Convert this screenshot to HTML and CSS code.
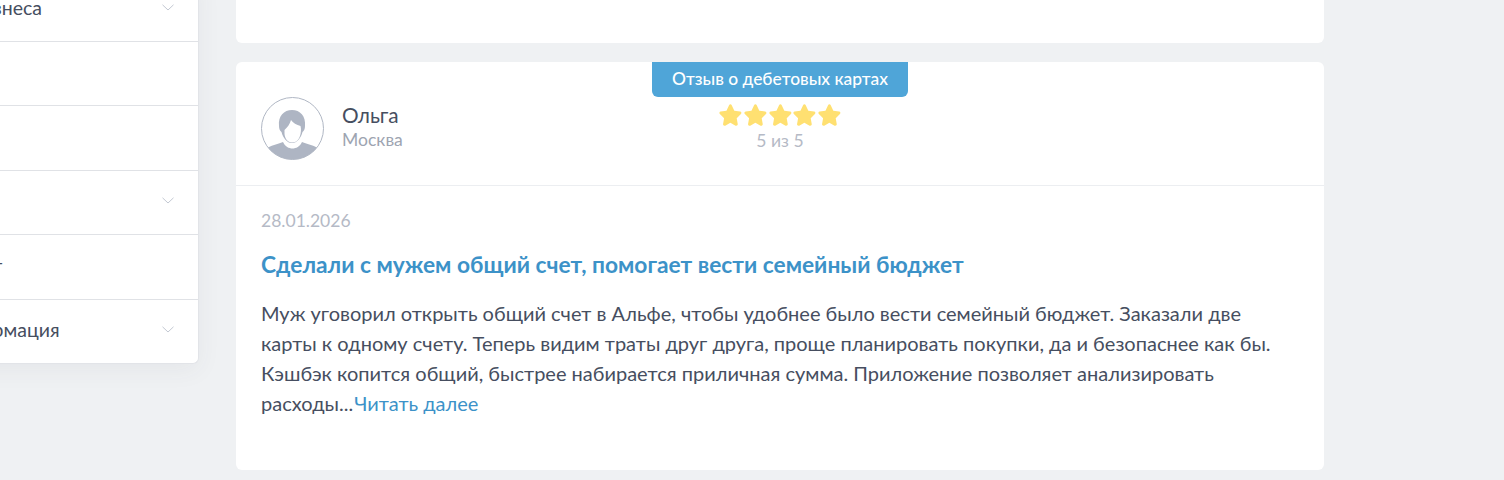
FILE: index.html
```html
<!DOCTYPE html>
<html lang="ru">
<head>
    <meta charset="UTF-8">
    <title>Отзывы</title>
    <link rel="stylesheet" href="styles.css">
</head>
<body>
    <svg class="svg-defs" width="0" height="0">
        <symbol id="star" viewBox="0 0 24 24">
            <path d="M12 2.200c.6 0 1 .3 1.300.9l2.500 5.200 5.600.8c1.200.2 1.700 1.600.8 2.500l-4.100 4 1 5.700c.2 1.200-1.100 2.100-2.100 1.500L12 20.100l-5 2.700c-1 .6-2.300-.3-2.100-1.500l1-5.700-4.100-4c-.9-.9-.4-2.300.8-2.500l5.600-.8 2.500-5.200c.3-.6.7-.9 1.300-.9z"/>
        </symbol>
        <symbol id="chevron" viewBox="0 0 12 7">
            <path d="M.5.8 6 6l5.500-5.200" fill="none" stroke="#c3c8d2" stroke-width="1"/>
        </symbol>
        <clipPath id="avatarClip">
            <circle cx="31.500" cy="31.500" r="31"/>
        </clipPath>
    </svg>

    <div class="page">
        <!-- Боковое меню -->
        <aside class="sidebar">
            <div class="side-row">
                <span>Из бизнеса</span>
                <svg class="chevron"><use href="#chevron"/></svg>
            </div>
            <div class="side-row"></div>
            <div class="side-row"></div>
            <div class="side-row">
                <svg class="chevron"><use href="#chevron"/></svg>
            </div>
            <div class="side-row"><span>Расчет</span></div>
            <div class="side-row">
                <span>Информация</span>
                <svg class="chevron"><use href="#chevron"/></svg>
            </div>
        </aside>

        <!-- Отзывы -->
        <main class="reviews">
            <div class="card card-prev"></div>

            <article class="card review">
                <header class="review-head">
                    <div class="author">
                        <svg class="avatar" viewBox="0 0 63 63">
                            <circle cx="31.500" cy="31.500" r="31" fill="#fff"/>
                            <path clip-path="url(#avatarClip)" d="M5 52c4-3.500 12-5 17-7 2 4.500 6 6.500 9.500 6.500s7.500-2 9.500-6.500c5 2 13 3.500 17 7v12H5z" fill="#aeb5c3"/>
                            <path d="M18 29c-1-10 5-16 13-16s14 6 13 16c0 3-1 5-2.500 6C40 41 36 46 31 46s-9-5-10.500-11C19 34 18 32 18 29z" fill="#aeb5c3"/>
                            <path d="M23.500 33c3-3 5.500-6 6.500-10 2 3 5.500 5 9.500 6 .8 3 .4 6 0 8-1 5-4 8.500-8.500 8.500s-7-4-7.500-8.500z" fill="#fff"/>
                            <circle cx="31.500" cy="31.500" r="31" fill="none" stroke="#b0b7c4"/>
                        </svg>
                        <div class="author-info">
                            <div class="author-name">Ольга</div>
                            <div class="author-city">Москва</div>
                        </div>
                    </div>
                    <div class="review-tag">Отзыв о дебетовых картах</div>
                    <div class="rating">
                        <div class="stars">
                            <svg class="star"><use href="#star"/></svg>
                            <svg class="star"><use href="#star"/></svg>
                            <svg class="star"><use href="#star"/></svg>
                            <svg class="star"><use href="#star"/></svg>
                            <svg class="star"><use href="#star"/></svg>
                        </div>
                        <div class="rating-text">5 из 5</div>
                    </div>
                </header>
                <div class="review-body">
                    <div class="review-date">28.01.2026</div>
                    <h3 class="review-title">Сделали с мужем общий счет, помогает вести семейный бюджет</h3>
                    <p class="review-text">Муж уговорил открыть общий счет в Альфе, чтобы удобнее было вести семейный бюджет. Заказали две карты к одному счету. Теперь видим траты друг друга, проще планировать покупки, да и безопаснее как бы. Кэшбэк копится общий, быстрее набирается приличная сумма. Приложение позволяет анализировать расходы...<a class="read-more" href="#">Читать далее</a></p>
                </div>
            </article>
        </main>
    </div>
</body>
</html>
```

FILE: styles.css
```css
* {
    box-sizing: border-box;
    margin: 0;
    padding: 0;
}

html, body {
    height: 480px;
    overflow: hidden;
}

body {
    font-family: 'Lato', 'Noto Sans', sans-serif;
    background: #eff1f3;
    color: #464e60;
}

.svg-defs {
    display: block;
    height: 0;
}

.page {
    display: flex;
    align-items: flex-start;
    gap: 37px;
    margin-left: -120px;
}

/* Боковое меню */
.sidebar {
    flex: none;
    width: 319px;
    margin-top: -22.4px;
    background: white;
    border: 1px solid #e2e4e8;
    border-top: none;
    border-radius: 0 0 6px 6px;
    box-shadow: 0 6px 24px rgba(60,70,90,0.06);
}

.side-row {
    display: flex;
    justify-content: space-between;
    align-items: center;
    height: 64.4px;
    padding: 0 24px 0 61px;
    border-bottom: 1px solid #e0e2e6;
    font-size: 19.5px;
    white-space: nowrap;
}

.side-row span {
    margin-bottom: 3px;
}

.side-row:last-child {
    height: 63.4px;
    border-bottom: none;
}

.side-row:nth-child(4) {
    justify-content: flex-end;
}

.chevron {
    width: 12px;
    height: 7px;
    margin-bottom: 4px;
}

/* Отзывы */
.reviews {
    flex: none;
    width: 1088px;
    display: flex;
    flex-direction: column;
    gap: 19px;
    margin-top: -40px;
}

.card {
    background: white;
    border-radius: 6px;
}

.card-prev {
    height: 83px;
}

.review {
    height: 408px;
}

.review-head {
    position: relative;
    display: flex;
    justify-content: center;
    height: 124px;
    border-bottom: 1px solid #eceef1;
}

.author {
    position: absolute;
    left: 25px;
    top: 35px;
    display: flex;
    align-items: center;
    gap: 18px;
}

.avatar {
    width: 63px;
    height: 63px;
}

.author-info {
    margin-bottom: 5px;
}

.author-name {
    font-size: 20.8px;
    line-height: 26px;
}

.author-city {
    font-size: 17.55px;
    line-height: 23px;
    color: #9da4b1;
}

.review-tag {
    position: absolute;
    left: 416px;
    top: 0;
    width: 256px;
    height: 35px;
    line-height: 33px;
    text-align: center;
    background: #4fa5d8;
    color: white;
    font-size: 17.4px;
    font-weight: 500;
    border-radius: 0 0 6px 6px;
}

.rating {
    position: absolute;
    left: 482px;
    top: 40px;
    width: 124px;
    text-align: center;
}

.stars {
    display: flex;
    justify-content: center;
    height: 25px;
}

.star {
    width: 25px;
    height: 25px;
    fill: #ffe071;
}

.rating-text {
    margin-top: 1px;
    font-size: 17.55px;
    line-height: 26px;
    color: #b5bac6;
}

.review-body {
    padding: 22px 25px 0;
}

.review-date {
    font-size: 17.55px;
    line-height: 26px;
    color: #b5bac6;
}

.review-title {
    margin-top: 17px;
    font-size: 22.75px;
    line-height: 28px;
    font-weight: 700;
    color: #3c92c8;
}

.review-text {
    margin-top: 19px;
    font-size: 20px;
    line-height: 30px;
}

.read-more {
    margin-left: 1px;
    color: #3c92c8;
    text-decoration: none;
}
```
